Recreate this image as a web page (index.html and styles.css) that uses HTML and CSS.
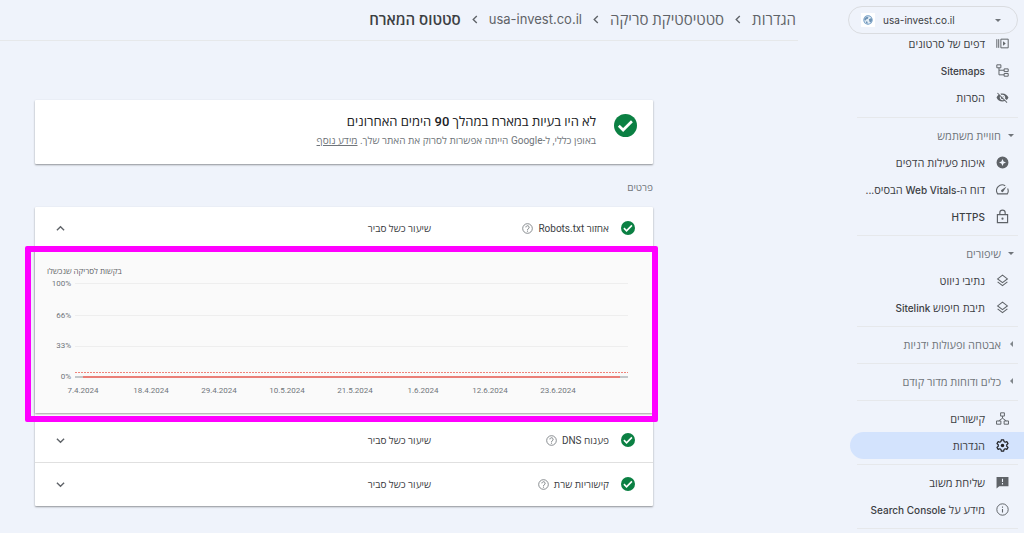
FILE: index.html
```html
<!DOCTYPE html>
<html lang="he" dir="rtl">
<head>
  <meta charset="UTF-8">
  <title>סטטוס המארח</title>
  <meta name="viewport" content="width=device-width, initial-scale=1.0">
  <link rel="stylesheet" href="styles.css">
</head>
<body>

  <!-- shared icons -->
  <svg class="sprite" aria-hidden="true">
    <symbol id="check" viewBox="0 0 24 24">
      <circle cx="12" cy="12" r="12" fill="#0b8043"/>
      <path d="M5 12.300l4.500 4.400 9.200-9.200" fill="none" stroke="#fff" stroke-width="2.800"/>
    </symbol>
    <symbol id="help" viewBox="0 0 24 24">
      <circle cx="12" cy="12" r="10.500" fill="none" stroke="currentColor" stroke-width="1.800"/>
      <path d="M8.500 9.500a3.500 3.500 0 1 1 5.600 2.800c-1.300 1-2.100 1.500-2.100 3" fill="none" stroke="currentColor" stroke-width="2"/>
      <circle cx="12" cy="17.700" r="1.300" fill="currentColor"/>
    </symbol>
    <symbol id="layers" viewBox="0 0 24 24">
      <path d="M12 2l9 7-9 7-9-7zM3 14.500l9 7 9-7" fill="none" stroke="currentColor" stroke-width="2"/>
    </symbol>
  </svg>

  <aside class="sidebar">
    <div class="property">
      <span class="favicon">
        <svg viewBox="0 0 24 24"><circle cx="12" cy="12" r="10" fill="#e3edf5" stroke="#6f9bc4" stroke-width="2.500"/><path d="M4 7l5-3 4 1-1 4-4 1-1 3-4-1zM14 10l6-3 2 5-3 6-3-1-1-3zM7 15l4 1v5l-4-2z" fill="#6f93b5"/></svg>
      </span>
      <select class="property-select" aria-label="נכס">
        <option>usa-invest.co.il</option>
      </select>
      <span class="arrow-down"></span>
    </div>

    <nav>
      <div class="nav-group first">
        <a href="#" class="nav-item">
          <svg viewBox="0 0 24 24"><path d="M1.500 4v16M5 4v16M9 4h13.500v16H9z" fill="none" stroke="currentColor" stroke-width="1.800"/><path d="M13 8l5 4-5 4z" fill="currentColor"/></svg>
          <span>דפים של סרטונים</span>
        </a>
        <a href="#" class="nav-item">
          <svg viewBox="0 0 24 24"><path d="M1.500 1.500H9V7H1.500zM15 9h7.500v5H15zM15 17.500h7.500v5H15zM5.500 7v13H15M5.500 11.500H15" fill="none" stroke="currentColor" stroke-width="1.800"/></svg>
          <span><b>Sitemaps</b></span>
        </a>
        <a href="#" class="nav-item">
          <svg viewBox="0 0 24 24"><path fill="currentColor" d="M12 7c2.760 0 5 2.240 5 5 0 .65-.13 1.260-.36 1.830l2.920 2.920c1.510-1.260 2.700-2.890 3.430-4.750-1.730-4.390-6-7.500-11-7.500-1.400 0-2.740.25-3.980.7l2.160 2.160C10.740 7.130 11.350 7 12 7zM2 4.270l2.280 2.280.46.46C3.080 8.300 1.780 10.020 1 12c1.730 4.390 6 7.500 11 7.500 1.550 0 3.030-.3 4.380-.84l.42.42L19.730 22 21 20.730 3.270 3 2 4.270zM7.530 9.800l1.550 1.550c-.05.21-.08.43-.08.65 0 1.660 1.340 3 3 3 .22 0 .44-.03.65-.08l1.550 1.550c-.67.33-1.410.53-2.200.53-2.760 0-5-2.240-5-5 0-.79.2-1.530.53-2.200zm4.310-.78l3.150 3.150.02-.16c0-1.660-1.340-3-3-3l-.17.010z"/></svg>
          <span>הסרות</span>
        </a>
      </div>

      <div class="nav-group">
        <button class="nav-title"><i class="arrow-down"></i>חוויית משתמש</button>
        <a href="#" class="nav-item">
          <svg viewBox="0 0 24 24"><path fill="currentColor" fill-rule="evenodd" d="M12 1a11 11 0 1 0 0 22 11 11 0 0 0 0-22zM12 5.500l2 4.500 4.500 2-4.500 2-2 4.500-2-4.500-4.500-2 4.500-2z"/></svg>
          <span>איכות פעילות הדפים</span>
        </a>
        <a href="#" class="nav-item">
          <svg viewBox="0 0 24 24"><path d="M17 5A10.500 10.500 0 0 0 3 20h18a10.500 10.500 0 0 0 .5-10" fill="none" stroke="currentColor" stroke-width="2"/><path d="M19.500 6.500l-6 9a2.200 2.200 0 1 1-3-3z" fill="currentColor"/></svg>
          <span>דוח ה-<b>Web Vitals</b> הבסיס...</span>
        </a>
        <a href="#" class="nav-item">
          <svg class="tall" viewBox="0 0 24 28"><path d="M2.500 10.500h19v15h-19zM7 10.500V7a5 5 0 0 1 10 0v3.500" fill="none" stroke="currentColor" stroke-width="2.200"/><circle cx="12" cy="18" r="2" fill="currentColor"/></svg>
          <span><b>HTTPS</b></span>
        </a>
      </div>

      <div class="nav-group">
        <button class="nav-title"><i class="arrow-down"></i>שיפורים</button>
        <a href="#" class="nav-item"><svg><use href="#layers"/></svg><span>נתיבי ניווט</span></a>
        <a href="#" class="nav-item"><svg><use href="#layers"/></svg><span>תיבת חיפוש <b>Sitelink</b></span></a>
      </div>

      <div class="nav-group">
        <button class="nav-title"><i class="arrow-side"></i>אבטחה ופעולות ידניות</button>
      </div>

      <div class="nav-group">
        <button class="nav-title"><i class="arrow-side"></i>כלים ודוחות מדור קודם</button>
      </div>

      <div class="nav-group">
        <a href="#" class="nav-item">
          <svg viewBox="0 0 24 24"><path d="M8.500 1.500h7v6h-7zM1 16.500h8v6H1zM15 16.500h8v6h-8zM12 7.500v4M5 16.500l7-5 7 5" fill="none" stroke="currentColor" stroke-width="1.800"/></svg>
          <span>קישורים</span>
        </a>
        <a href="#" class="nav-item active">
          <svg viewBox="0 0 24 24"><path d="M9.800 1.500h4.400l.6 3.100 2.200 1.300 3-1.100 2.200 3.800-2.400 2.100v2.600l2.400 2.100-2.200 3.800-3-1.100-2.200 1.300-.6 3.100H9.800l-.6-3.100L7 18.100l-3 1.100-2.200-3.800 2.400-2.100v-2.600L1.800 8.600 4 4.800l3 1.100 2.200-1.300z" fill="none" stroke="currentColor" stroke-width="2.200" stroke-linejoin="round"/><circle cx="12" cy="12" r="3.200" fill="currentColor"/></svg>
          <span>הגדרות</span>
        </a>
      </div>

      <div class="nav-group">
        <a href="#" class="nav-item">
          <svg viewBox="0 0 24 24"><path fill="currentColor" fill-rule="evenodd" d="M1 2h22v17H6l-5 4zM11 5v6h2V5zM11 13v2.500h2V13z"/></svg>
          <span>שליחת משוב</span>
        </a>
        <a href="#" class="nav-item">
          <svg viewBox="0 0 24 24"><circle cx="12" cy="12" r="10.500" fill="none" stroke="currentColor" stroke-width="1.800"/><path d="M12 11v6.500M12 6.500v2.200" stroke="currentColor" stroke-width="2"/></svg>
          <span>מידע על <b>Search Console</b></span>
        </a>
      </div>
      <div class="nav-group"></div>
    </nav>
  </aside>

  <main class="main">
    <header class="breadcrumbs">
      <a href="#">הגדרות</a>
      <svg viewBox="0 0 6 10"><path d="M5 1L1 5l4 4"/></svg>
      <a href="#">סטטיסטיקת סריקה</a>
      <svg viewBox="0 0 6 10"><path d="M5 1L1 5l4 4"/></svg>
      <a href="#" class="site">usa-invest.co.il</a>
      <svg viewBox="0 0 6 10"><path d="M5 1L1 5l4 4"/></svg>
      <h1>סטטוס המארח</h1>
    </header>

    <div class="content">
      <section class="card summary">
        <svg class="summary-icon"><use href="#check"/></svg>
        <div>
          <h2>לא היו בעיות במארח במהלך 90 הימים האחרונים</h2>
          <p>באופן כללי, ל-Google הייתה אפשרות לסרוק את האתר שלך. <a href="#">מידע נוסף</a></p>
        </div>
      </section>

      <h3 class="section-label">פרטים</h3>

      <section class="card">
        <div class="row">
          <svg class="row-icon"><use href="#check"/></svg>
          <div class="row-name">אחזור Robots.txt <button class="help" aria-label="עזרה"><svg><use href="#help"/></svg></button></div>
          <span>שיעור כשל סביר</span>
          <button class="toggle" aria-label="כיווץ"><svg viewBox="0 0 10 10"><path d="M1 7l4-4 4 4"/></svg></button>
        </div>

        <div class="panel">
          <svg class="chart" viewBox="0 0 618 163" direction="ltr">
            <text class="chart-title" x="12" y="24">בקשות לסריקה שנכשלו</text>
            <g class="grid-lines">
              <path d="M40 33.500h553M40 65.500h553M40 96.500h553"/>
            </g>
            <g class="y-labels">
              <text x="36" y="36">100%</text>
              <text x="36" y="68">66%</text>
              <text x="36" y="98">33%</text>
              <text x="36" y="129">0%</text>
            </g>
            <path class="axis" d="M40 127h553"/>
            <path class="threshold" d="M40 122.500h553"/>
            <path class="series" d="M48 127h537"/>
            <g class="x-labels">
              <text x="48" y="143">7.4.2024</text>
              <text x="116" y="143">18.4.2024</text>
              <text x="184" y="143">29.4.2024</text>
              <text x="252" y="143">10.5.2024</text>
              <text x="320" y="143">21.5.2024</text>
              <text x="388" y="143">1.6.2024</text>
              <text x="455" y="143">12.6.2024</text>
              <text x="523" y="143">23.6.2024</text>
            </g>
          </svg>
          <div class="highlight"></div>
        </div>

        <div class="row">
          <svg class="row-icon"><use href="#check"/></svg>
          <div class="row-name">פענוח DNS <button class="help" aria-label="עזרה"><svg><use href="#help"/></svg></button></div>
          <span>שיעור כשל סביר</span>
          <button class="toggle" aria-label="הרחבה"><svg viewBox="0 0 10 10"><path d="M1 3l4 4 4-4"/></svg></button>
        </div>

        <div class="row bordered">
          <svg class="row-icon"><use href="#check"/></svg>
          <div class="row-name">קישוריות שרת <button class="help" aria-label="עזרה"><svg><use href="#help"/></svg></button></div>
          <span>שיעור כשל סביר</span>
          <button class="toggle" aria-label="הרחבה"><svg viewBox="0 0 10 10"><path d="M1 3l4 4 4-4"/></svg></button>
        </div>
      </section>
    </div>
  </main>

</body>
</html>
```
FILE: styles.css
```css
* {
  box-sizing: border-box;
}

body {
  display: flex;
  margin: 0;
  min-height: 100vh;
  overflow: hidden;
  background-color: #eff3fb;
  color: #3c4043;
  font-family: Roboto, "Open Sans", sans-serif;
  font-size: 10px;
}

button {
  padding: 0;
  border: none;
  background: none;
  color: inherit;
  font: inherit;
  cursor: pointer;
}

.sprite {
  position: absolute;
  width: 0;
  height: 0;
}

/* sidebar */
.sidebar {
  flex: none;
  width: 176px;
  height: 100vh;
  padding-top: 6px;
  overflow: hidden;
}

.property {
  display: flex;
  flex-direction: row-reverse;
  align-items: center;
  height: 28px;
  margin-right: 6px;
  padding: 0 16px 0 12px;
  border: 1px solid #dadce0;
  border-radius: 14px;
}

.favicon {
  display: flex;
  padding: 2px;
  background-color: #fff;
}

.favicon svg {
  width: 10px;
  height: 10px;
}

.property-select {
  flex: 1;
  min-width: 0;
  margin-left: 8px;
  padding: 0;
  border: none;
  background: none;
  appearance: none;
  direction: ltr;
  color: #3c4043;
  font-family: Inter, sans-serif;
  font-size: 10px;
}

.arrow-down {
  border: 3px solid transparent;
  border-top-color: #70757a;
  border-bottom: none;
}

.arrow-side {
  margin: 0 1px 0 2px;
  border: 3px solid transparent;
  border-right-color: #80868b;
  border-left: none;
}

.nav-group {
  padding: 4px 0 5px;
  border-top: 1px solid #e6e8eb;
  margin: 0 6px 0 9px;
}

.nav-group.first {
  margin-top: -4px;
  padding: 0 0 6px;
  border-top: none;
}

.nav-item {
  display: flex;
  align-items: center;
  gap: 11px;
  height: 27px;
  margin: 0 -6px 0 -7px;
  padding: 0 15px 0 18px;
  color: #3c4043;
  font-family: "Open Sans", sans-serif;
  font-size: 11px;
  font-weight: 500;
  line-height: 16px;
  text-decoration: none;
}

.nav-item b {
  font-family: Inter, sans-serif;
  font-size: 10px;
  font-weight: 500;
}

.nav-item svg {
  flex: none;
  width: 13px;
  height: 13px;
  color: #5f6368;
}

.nav-item svg.tall {
  height: 15px;
}

.nav-item span {
  white-space: nowrap;
}

.nav-item.active {
  border-radius: 14px 0 0 14px;
  border-radius: 0 0 0 0;
  border-top-left-radius: 14px;
  border-bottom-left-radius: 14px;
  background-color: #d3e3fd;
}

.nav-item.active svg {
  color: #202124;
}

.nav-title {
  display: flex;
  align-items: center;
  gap: 7px;
  width: 100%;
  height: 27px;
  padding-right: 4px;
  padding-bottom: 1px;
  color: #70757a;
  font-size: 11px;
}

/* main */
.main {
  flex: 1;
  min-width: 0;
  margin-right: 50px;
}

.breadcrumbs {
  display: flex;
  align-items: center;
  gap: 11px;
  height: 41px;
  padding: 0 2px 2px 0;
  border-bottom: 1px solid #e6e8ea;
  font-family: "Open Sans", sans-serif;
  font-size: 15px;
}

.breadcrumbs a {
  color: #5f6368;
  text-decoration: none;
}

.breadcrumbs .site {
  font-family: Inter, sans-serif;
  font-size: 13px;
}

.breadcrumbs h1 {
  margin: 0;
  font-size: 15px;
  font-weight: 600;
}

.breadcrumbs svg {
  width: 6px;
  height: 9px;
}

.breadcrumbs path,
.toggle path {
  fill: none;
  stroke: #5f6368;
  stroke-width: 1.5;
}

.content {
  padding: 59px 145px 0 35px;
}

.card {
  background-color: #fff;
  border-radius: 1px;
  box-shadow: 0 1px 2px rgba(0, 0, 0, 0.4);
}

.summary {
  display: flex;
  gap: 18px;
  height: 64px;
  padding: 14px 16px 0 0;
}

.summary-icon {
  width: 23px;
  height: 23px;
}

.summary h2 {
  margin: 0;
  color: #202124;
  font-size: 13px;
  font-weight: 500;
  line-height: 16px;
}

.summary p {
  margin: 3px 0 0;
  color: #70757a;
  line-height: 16px;
}

.summary a {
  color: inherit;
}

.section-label {
  margin: 16px 0 11px;
  color: #70757a;
  font-size: 10px;
  font-weight: 400;
  line-height: 16px;
}

.row {
  display: grid;
  grid-template-columns: 14px 166px 1fr 12px;
  column-gap: 12px;
  align-items: center;
  height: 43px;
  padding: 0 18px 1px 19px;
}

.row.bordered {
  height: 44px;
  border-top: 1px solid #e0e0e0;
}

.row-icon {
  width: 14px;
  height: 14px;
}

.row-name {
  display: flex;
  align-items: center;
  gap: 5px;
}

.help,
.toggle {
  display: flex;
}

.help svg {
  width: 11px;
  height: 11px;
  color: #70757a;
}

.toggle {
  justify-content: center;
}

.toggle svg {
  width: 9px;
  height: 9px;
}

/* chart */
.panel {
  position: relative;
  padding-bottom: 6px;
}

.chart {
  display: block;
  width: 100%;
  background-color: #fafafa;
  box-shadow: 0 1px 2px rgba(0, 0, 0, 0.4);
  font-size: 8px;
}

.chart text {
  fill: #70757a;
}

.chart .chart-title {
  fill: #5f6368;
}

.y-labels {
  text-anchor: end;
}

.x-labels {
  text-anchor: middle;
}

.grid-lines {
  stroke: #eeeeee;
}

.axis {
  stroke: #c4c7ca;
  stroke-width: 2;
}

.threshold {
  stroke: #f0837a;
  stroke-dasharray: 2 1;
}

.series {
  stroke: #ea7f78;
  stroke-width: 2;
}

.highlight {
  position: absolute;
  inset: -4px -5px -3px -10px;
  border: 6px solid #f0f;
  border-radius: 2px;
  pointer-events: none;
}
```
